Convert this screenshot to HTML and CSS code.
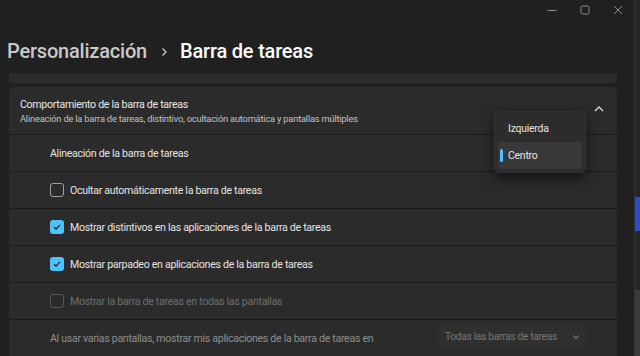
FILE: index.html
```html
<!DOCTYPE html>
<html lang="es">
<head>
    <meta charset="UTF-8">
    <meta name="viewport" content="width=device-width, initial-scale=1.0">
    <title>Barra de tareas</title>
    <link rel="stylesheet" href="styles.css">
</head>
<body>
    <div class="window">
        <div class="titlebar">
            <span class="ctl">
                <svg width="10" height="10" viewBox="0 0 10 10"><path d="M0.5 5.5h9" stroke="#8c8c8c" stroke-width="1"/></svg>
            </span>
            <span class="ctl">
                <svg width="10" height="10" viewBox="0 0 10 10"><rect x="1" y="1" width="8" height="8" rx="1.5" fill="none" stroke="#8c8c8c" stroke-width="1"/></svg>
            </span>
            <span class="ctl">
                <svg width="10" height="10" viewBox="0 0 10 10"><path d="M1 1l8 8M9 1l-8 8" stroke="#8c8c8c" stroke-width="1"/></svg>
            </span>
        </div>

        <h1 class="breadcrumb">
            <span class="crumb">Personalización</span>
            <svg class="crumb-sep" width="8" height="10" viewBox="0 0 8 10"><path d="M2.5 1.5l3.5 3.5-3.5 3.5" fill="none" stroke="#cfcfcf" stroke-width="1.3"/></svg>
            <span class="current">Barra de tareas</span>
        </h1>

        <div class="content">
            <div class="card-stub"></div>

            <div class="expander">
                <div class="exp-header">
                    <div class="exp-text">
                        <div class="exp-title">Comportamiento de la barra de tareas</div>
                        <div class="exp-sub">Alineación de la barra de tareas, distintivo, ocultación automática y pantallas múltiples</div>
                    </div>
                    <svg class="exp-chevron" width="12" height="8" viewBox="0 0 12 8"><path d="M2 6l4-4 4 4" fill="none" stroke="#d8d8d8" stroke-width="1.3"/></svg>
                </div>

                <div class="row">
                    <span class="label">Alineación de la barra de tareas</span>
                </div>

                <div class="row">
                    <span class="check"></span>
                    <span class="label">Ocultar automáticamente la barra de tareas</span>
                </div>

                <div class="row">
                    <span class="check on">
                        <svg width="10" height="10" viewBox="0 0 10 10"><path d="M2 5.2l2 2 4-4.4" fill="none" stroke="#1a1a1a" stroke-width="1.2"/></svg>
                    </span>
                    <span class="label">Mostrar distintivos en las aplicaciones de la barra de tareas</span>
                </div>

                <div class="row">
                    <span class="check on">
                        <svg width="10" height="10" viewBox="0 0 10 10"><path d="M2 5.2l2 2 4-4.4" fill="none" stroke="#1a1a1a" stroke-width="1.2"/></svg>
                    </span>
                    <span class="label">Mostrar parpadeo en aplicaciones de la barra de tareas</span>
                </div>

                <div class="row disabled">
                    <span class="check"></span>
                    <span class="label">Mostrar la barra de tareas en todas las pantallas</span>
                </div>

                <div class="row muted">
                    <span class="label">Al usar varias pantallas, mostrar mis aplicaciones de la barra de tareas en</span>
                    <span class="select">
                        <span>Todas las barras de tareas</span>
                        <svg width="10" height="8" viewBox="0 0 10 8"><path d="M2 2.5l3 3 3-3" fill="none" stroke="#777" stroke-width="1.1"/></svg>
                    </span>
                </div>

                <div class="menu">
                    <div class="menu-item">Izquierda</div>
                    <div class="menu-item selected">Centro</div>
                </div>
            </div>
        </div>
    </div>

    <div class="side">
        <div class="side-blue"></div>
        <div class="side-gray"></div>
    </div>
</body>
</html>
```

FILE: styles.css
```css
body {
    margin: 0;
    width: 640px;
    height: 356px;
    overflow: hidden;
    display: flex;
    background-color: #202020;
    font-family: Roboto, "Noto Sans", sans-serif;
    color: #e6e6e6;
    white-space: nowrap;
}

.window {
    width: 635px;
    display: flex;
    flex-direction: column;
}

.titlebar {
    height: 19px;
    display: flex;
    justify-content: flex-end;
    align-items: center;
}

.ctl {
    width: 33px;
    display: flex;
    justify-content: center;
}

.breadcrumb {
    margin: 0;
    height: 54px;
    padding-left: 7px;
    padding-top: 10px;
    box-sizing: border-box;
    display: flex;
    align-items: center;
    gap: 9px;
    font-size: 20px;
    font-weight: 500;
    letter-spacing: -0.2px;
}

.crumb {
    color: #c9c9c9;
}

.crumb-sep {
    margin: 2px 3px 0 4px;
}

.current {
    color: #ffffff;
}

.content {
    width: 608px;
    padding-left: 9px;
    display: flex;
    flex-direction: column;
    gap: 4px;
}

.card-stub {
    height: 10px;
    background: #2c2c2c;
    border-radius: 0 0 4px 4px;
}

.expander {
    position: relative;
    display: flex;
    flex-direction: column;
    gap: 1px;
    background: #1c1c1c;
    border-radius: 4px 4px 0 0;
}

.exp-header {
    height: 47px;
    background: #2b2b2b;
    border-radius: 4px 4px 0 0;
    display: flex;
    align-items: center;
    justify-content: space-between;
    padding: 0 12px 0 11px;
}

.exp-title {
    font-size: 10.6px;
    letter-spacing: -0.3px;
    color: #e8e8e8;
}

.exp-sub {
    font-size: 9.3px;
    letter-spacing: -0.2px;
    color: #c2c2c2;
    margin-top: 2px;
}

.exp-chevron {
    margin-bottom: 4px;
}

.row {
    height: 36px;
    background: #2b2b2b;
    display: flex;
    align-items: center;
    padding-left: 41px;
    padding-right: 30px;
    gap: 6px;
    font-size: 10.6px;
    letter-spacing: -0.3px;
    color: #e4e4e4;
}

.check {
    width: 12px;
    height: 12px;
    border: 1px solid #a0a0a0;
    border-radius: 3px;
    display: flex;
    align-items: center;
    justify-content: center;
}

.check.on {
    width: 14px;
    height: 14px;
    border: none;
    background: #4cc2ff;
}

.row.disabled {
    color: #6e6e6e;
}

.row.disabled .check {
    border-color: #545454;
}

.row.muted {
    color: #8e8e8e;
    justify-content: space-between;
}

.select {
    width: 136px;
    height: 23px;
    margin-top: -3px;
    padding: 0 6px 0 8px;
    background: #2f2f2f;
    border-radius: 4px;
    display: flex;
    align-items: center;
    justify-content: space-between;
    color: #777777;
    font-size: 10.2px;
}

.menu {
    position: absolute;
    left: 485px;
    top: 24px;
    width: 84px;
    padding: 3px 3px;
    background: #2c2c2c;
    border: 1px solid #333;
    border-radius: 6px;
    box-shadow: 0 6px 14px rgba(0, 0, 0, 0.55);
}

.menu-item {
    position: relative;
    height: 27px;
    padding-left: 10px;
    display: flex;
    align-items: center;
    font-size: 10.4px;
    letter-spacing: -0.2px;
    color: #e6e6e6;
    border-radius: 4px;
}

.menu-item.selected {
    background: #383838;
}

.menu-item.selected::before {
    content: "";
    position: absolute;
    left: 2px;
    top: 7px;
    width: 3px;
    height: 13px;
    border-radius: 2px;
    background: #4cc2ff;
}

.side {
    width: 5px;
    background: #262626;
    border-left: 1px solid #333;
    display: flex;
    flex-direction: column;
}

.side-blue {
    margin-top: 197px;
    height: 34px;
    background: #2a4ad0;
}

.side-gray {
    margin-top: 59px;
    flex: 1;
    background: #3a3a3a;
}
```
